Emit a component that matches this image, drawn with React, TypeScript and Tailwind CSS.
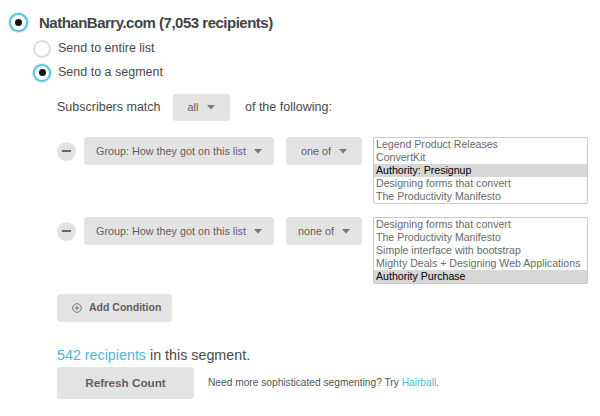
import React from "react";

function Radio({ checked, size = 19 }: { checked: boolean; size?: number }) {
  if (!checked) {
    return (
      <span
        className="box-border inline-block shrink-0 rounded-full border-2 border-[#dcdcdc] bg-white"
        style={{ width: size, height: size }}
      />
    );
  }
  return (
    <span
      className="box-border flex shrink-0 items-center justify-center rounded-full border-2 border-[#5ec4df] bg-white shadow-[0_0_0_1px_#c4e9f3]"
      style={{ width: size, height: size }}
    >
      <span className="block h-[7px] w-[7px] rounded-full bg-[#111]" />
    </span>
  );
}

function Caret() {
  return (
    <svg width="8" height="5" viewBox="0 0 8 5" className="shrink-0">
      <path d="M0 0 L8 0 L4 4.5 Z" fill="#777" />
    </svg>
  );
}

function Select({ label, width }: { label: string; width: number }) {
  return (
    <div
      className="flex h-[28px] items-center justify-center gap-[8px] rounded-[3px] bg-[#e3e3e3] text-[10.8px] text-[#5f5f5f]"
      style={{ width }}
    >
      <span>{label}</span>
      <Caret />
    </div>
  );
}

function Minus() {
  return (
    <span className="flex h-[19px] w-[19px] shrink-0 items-center justify-center rounded-full bg-[#e2e2e2]">
      <span className="block h-[2px] w-[9px] bg-[#666]" />
    </span>
  );
}

function ListBox({ items, selected }: { items: string[]; selected: number }) {
  return (
    <div className="box-border w-[215px] overflow-hidden rounded-[2px] border border-[#c9c9c9] bg-white text-[10.6px] leading-[13px]">
      {items.map((it, i) => (
        <div
          key={it}
          className={
            i === selected
              ? "whitespace-nowrap bg-[#d7d7d7] px-[2px] text-[#000]"
              : "whitespace-nowrap px-[2px] text-[#6a6a6a]"
          }
        >
          {it}
        </div>
      ))}
    </div>
  );
}

export default function App() {
  return (
    <div
      className="h-[416px] w-[600px] overflow-hidden bg-white text-[#444]"
      style={{ fontFamily: '"Liberation Sans", Arial, Helvetica, sans-serif' }}
    >
      <div className="flex items-center gap-[11px] pl-[9px] pt-[13px]">
        <Radio checked />
        <span className="text-[15px] font-bold leading-[19px] tracking-[-0.5px] text-[#444]">
          NathanBarry.com (7,053 recipients)
        </span>
      </div>

      <div className="mt-[7px] flex flex-col gap-[5px] pl-[33px]">
        <div className="flex h-[19px] items-center gap-[7px]">
          <Radio checked={false} size={18} />
          <span className="text-[12.5px] text-[#4a4a4a]">Send to entire list</span>
        </div>
        <div className="flex h-[19px] items-center gap-[7px]">
          <Radio checked size={18} />
          <span className="text-[12.5px] text-[#4a4a4a]">Send to a segment</span>
        </div>
      </div>

      <div className="mt-[12px] flex items-center pl-[57px] text-[12.5px] text-[#4a4a4a]">
        <span className="w-[116px]">Subscribers match</span>
        <div className="flex h-[27px] w-[57px] items-center justify-center gap-[9px] rounded-[3px] bg-[#e3e3e3] text-[10.8px] text-[#5f5f5f]">
          <span>all</span>
          <Caret />
        </div>
        <span className="ml-[15px]">of the following:</span>
      </div>

      <div className="mt-[16px] flex items-start pl-[57px]">
        <div className="flex h-[28px] items-center">
          <Minus />
        </div>
        <div className="ml-[8px]">
          <Select label="Group: How they got on this list" width={190} />
        </div>
        <div className="ml-[12px]">
          <Select label="one of" width={76} />
        </div>
        <div className="ml-[11px]">
          <ListBox
            items={[
              "Legend Product Releases",
              "ConvertKit",
              "Authority: Presignup",
              "Designing forms that convert",
              "The Productivity Manifesto",
            ]}
            selected={2}
          />
        </div>
      </div>

      <div className="mt-[13px] flex items-start pl-[57px]">
        <div className="flex h-[28px] items-center">
          <Minus />
        </div>
        <div className="ml-[8px]">
          <Select label="Group: How they got on this list" width={190} />
        </div>
        <div className="ml-[12px]">
          <Select label="none of" width={76} />
        </div>
        <div className="ml-[11px]">
          <ListBox
            items={[
              "Designing forms that convert",
              "The Productivity Manifesto",
              "Simple interface with bootstrap",
              "Mighty Deals + Designing Web Applications",
              "Authority Purchase",
            ]}
            selected={4}
          />
        </div>
      </div>

      <div className="mt-[10px] pl-[57px]">
        <div className="flex h-[28px] w-[115px] items-center gap-[7px] rounded-[3px] bg-[#e3e3e3] pl-[15px] text-[10.5px] font-bold text-[#5f5f5f]">
          <svg width="10" height="10" viewBox="0 0 10 10">
            <circle cx="5" cy="5" r="4.3" fill="none" stroke="#777" strokeWidth="1" />
            <path d="M5 2.8 V7.2 M2.8 5 H7.2" stroke="#777" strokeWidth="1" />
          </svg>
          <span>Add Condition</span>
        </div>
      </div>

      <div className="mt-[24px] pl-[57px] text-[14.3px] leading-[18px] text-[#4a4a4a]">
        <span className="text-[#4bbad8]">542 recipients</span> in this segment.
      </div>

      <div className="mt-[3px] flex items-center pl-[57px]">
        <div className="flex h-[32px] w-[137px] items-center justify-center rounded-[3px] bg-[#e3e3e3] text-[11.7px] font-bold text-[#5f5f5f]">
          Refresh Count
        </div>
        <span className="ml-[14px] text-[10.2px] text-[#555]">
          Need more sophisticated segmenting? Try <span className="text-[#4bbad8]">Hairball</span>.
        </span>
      </div>
    </div>
  );
}
